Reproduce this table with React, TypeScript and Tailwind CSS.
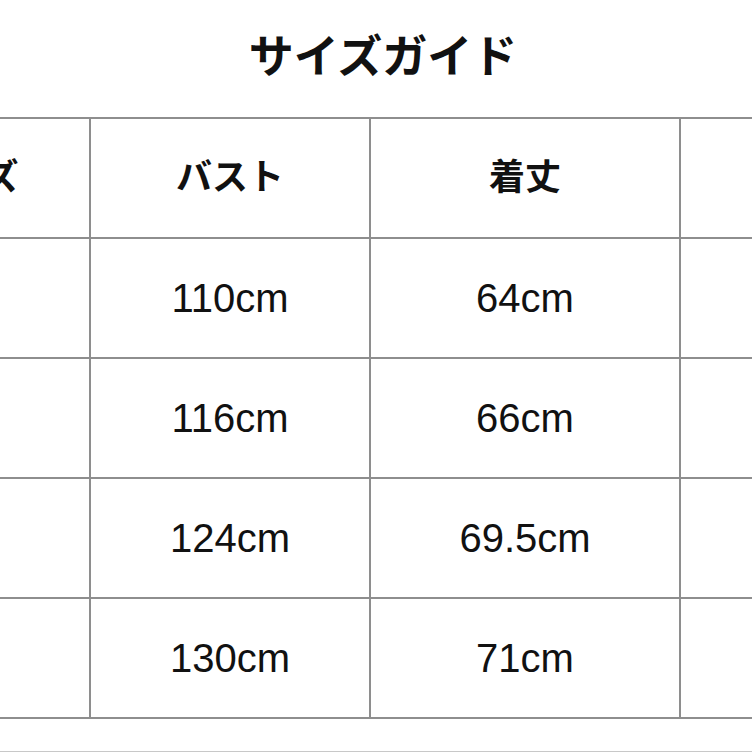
import React from "react";

const font = { fontFamily: '"Liberation Sans", "Noto Sans CJK JP", sans-serif' };

const HEADERS = ["サイズ", "バスト", "着丈", "袖丈"] as const;

const ROWS: string[][] = [
  ["M", "110cm", "64cm", "58cm"],
  ["L", "116cm", "66cm", "60cm"],
  ["XL", "124cm", "69.5cm", "62cm"],
  ["2XL", "130cm", "71cm", "64cm"],
];

const cell = "flex h-[118px] items-center justify-center bg-white";

export default function App() {
  return (
    <div
      className="flex h-[752px] w-[752px] flex-col overflow-hidden bg-white text-[#111]"
      style={font}
    >
      <div className="flex h-[117px] shrink-0 items-center justify-center pb-[2px] pl-[14px]">
        <h1 className="text-[45px] font-bold leading-none">サイズガイド</h1>
      </div>

      <div className="-ml-[159px] grid w-max shrink-0 grid-cols-[248px_278px_308px_280px] gap-[2px] bg-[#8e8e8e] py-[2px]">
        {HEADERS.map((h) => (
          <div key={h} className={`${cell} text-[36px] font-bold`}>
            {h}
          </div>
        ))}
        {ROWS.map((row, i) =>
          row.map((v, j) => (
            <div key={`r${i}-${j}`} className={`${cell} text-[40px]`}>
              {v}
            </div>
          ))
        )}
      </div>

      <div className="mt-auto border-t border-[#c8c8c8]" />
    </div>
  );
}
